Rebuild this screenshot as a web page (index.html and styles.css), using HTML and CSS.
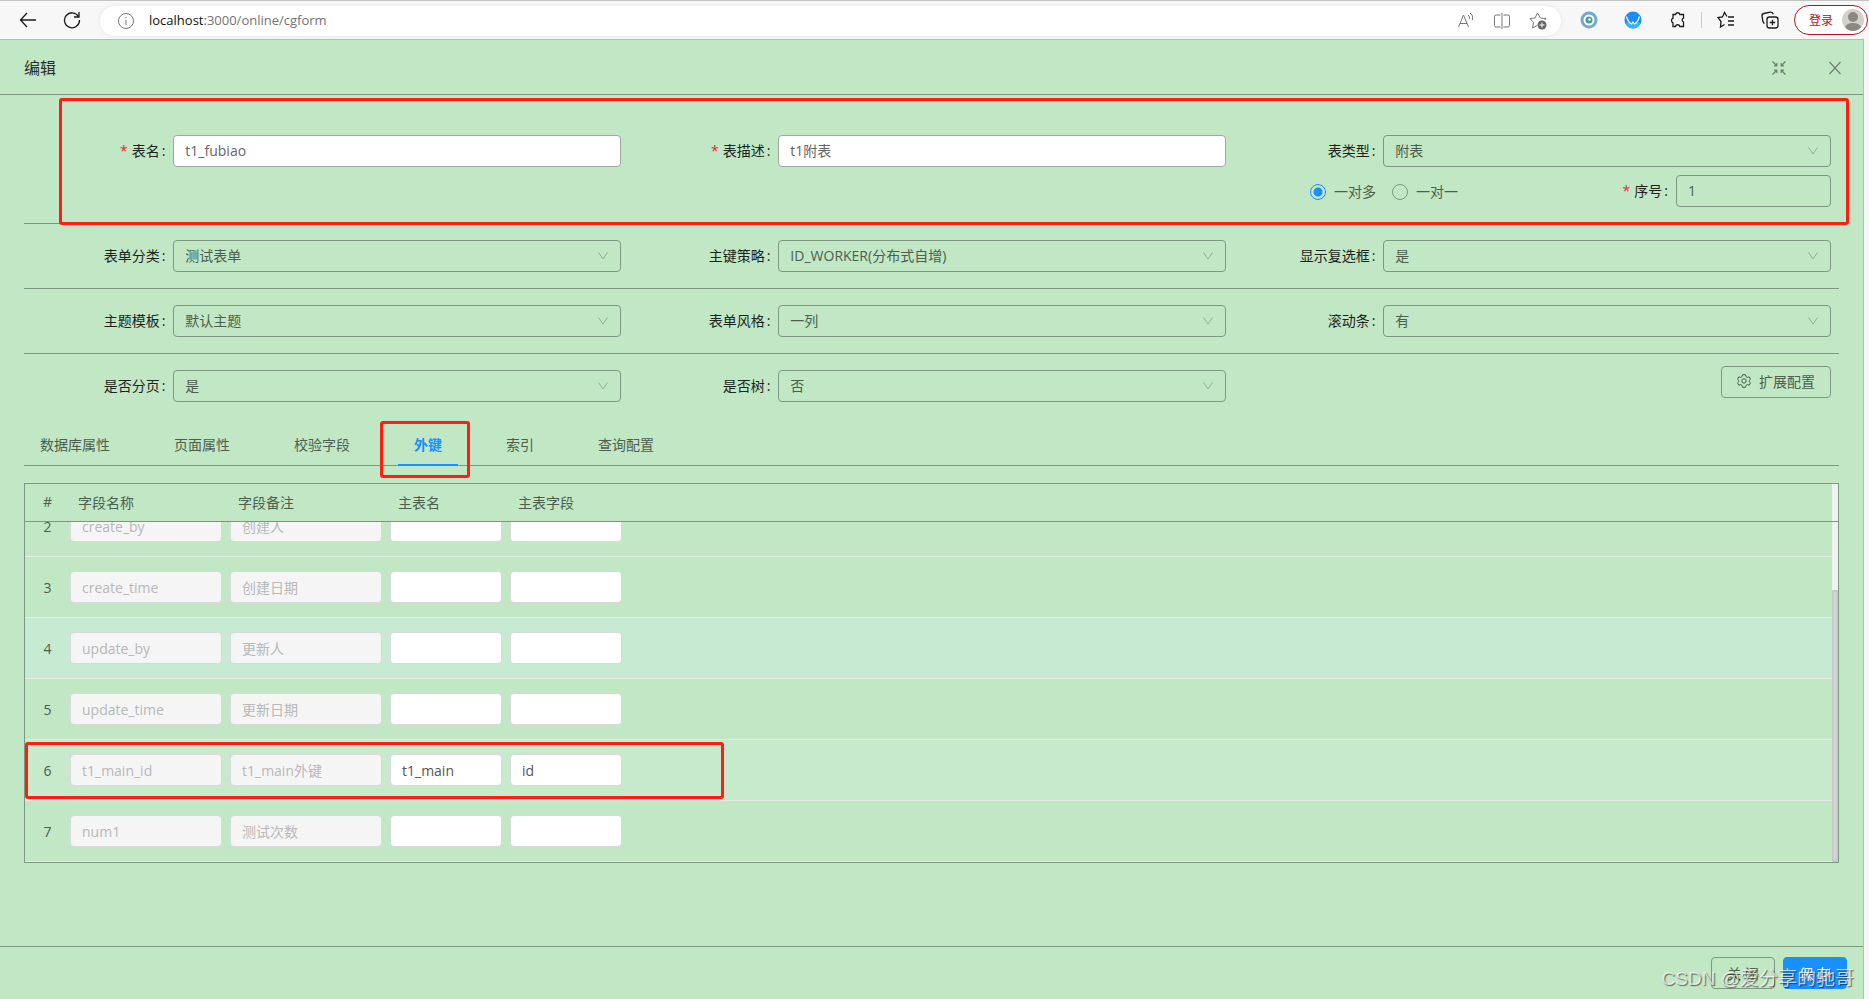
FILE: index.html
```html
<!DOCTYPE html>
<html lang="zh-CN">
<head>
<meta charset="utf-8">
<title>编辑</title>
<link rel="stylesheet" href="styles.css">
</head>
<body>
<div class="app">
  <header class="browser">
    <div class="nav">
      <button class="ico" aria-label="后退"><svg width="18" height="16" viewBox="0 0 18 16"><path d="M17 8H1.500M8 1L1.500 8L8 15"/></svg></button>
      <button class="ico" aria-label="刷新"><svg width="18" height="18" viewBox="0 0 18 18"><path d="M15.500 5.500A7.500 7.500 0 1 0 16.500 9M16 1V6H11"/></svg></button>
    </div>
    <div class="omnibox">
      <svg class="info" width="18" height="18" viewBox="0 0 18 18"><circle cx="9" cy="9" r="7.500"/><path d="M9 8V13M9 5V6.300"/></svg>
      <span class="url"><b>localhost</b>:3000/online/cgform</span>
      <div class="omni-icons">
        <svg width="18" height="18" viewBox="0 0 18 18"><path d="M1.500 15L6.500 3L11.500 15M3 11.500H10M11 3Q13 4.500 12.500 7M13 1Q17 3.500 15.500 8"/></svg>
        <svg width="18" height="18" viewBox="0 0 18 18"><path d="M7.500 3H3Q1.500 3 1.500 4.500V13.500Q1.500 15 3 15H7.500M10.500 3H15Q16.500 3 16.500 4.500V13.500Q16.500 15 15 15H10.500M9 1V17"/></svg>
        <svg width="18" height="18" viewBox="0 0 18 18"><path d="M15.500 8L17 6.500L11.500 6L8.500 1L6 6L1 6.500L4.500 10.500L3.500 16L8 13.500"/><circle class="solid" cx="13" cy="13" r="4.500"/><path class="plus" d="M13 10.500V15.500M10.500 13H15.500"/></svg>
      </div>
    </div>
    <div class="extensions">
      <svg width="18" height="18" viewBox="0 0 18 18"><circle cx="9" cy="9" r="8.500" fill="#6fabd0"/><circle cx="9" cy="9" r="5.500" fill="#fff"/><circle cx="9" cy="9" r="3.500" fill="#4a9c98"/><circle cx="9.500" cy="8.500" r="1.200" fill="#fff"/></svg>
      <svg width="18" height="18" viewBox="0 0 18 18"><circle cx="9" cy="9" r="8.500" fill="#1b8df7"/><path d="M1 12Q5 10 9 13Q13 10 17 12Q14 17.500 9 17.500Q4 17.500 1 12Z" fill="#35b3f3"/><path d="M2.500 5.500Q4.500 12 7.500 13L9 11L10.500 13Q13.500 12 15.500 5.500" stroke="#fff" stroke-width="1.200" fill="none"/></svg>
      <svg class="line" width="18" height="18" viewBox="0 0 18 18"><path d="M5 3.500H7.500A2.200 2.200 0 0 1 11.800 3.500H15.500V7.200A2 2 0 0 0 15.500 11V15.500H11.800A2.200 2.200 0 0 0 7.500 15.500H5V11.800A2.500 2.500 0 0 1 5 7.200Z"/></svg>
      <span class="sep"></span>
      <svg class="line" width="18" height="18" viewBox="0 0 18 18"><path d="M10 5.500L7.500 1.500L5.500 6L1 6.500L4 10.500L3.500 16L7.500 13.500M11 6H17M11 10H17M11 14H17"/></svg>
      <svg class="line" width="18" height="18" viewBox="0 0 18 18"><rect x="6" y="6" width="11" height="11" rx="2.500"/><path d="M3.500 12.500Q2.500 12 2 10.500L1 5Q.8 3 2.800 2.500L9.500 1.200Q11.500 1 12.300 3.300M11.500 8.800V14.200M8.800 11.500H14.200"/></svg>
    </div>
    <button class="login">登录
      <svg width="22" height="22" viewBox="0 0 22 22"><circle cx="11" cy="11" r="11" fill="#d4d0cc"/><circle cx="11" cy="8" r="5" fill="#8b8783"/><path d="M3 18Q5 14 11 14T19 18Q16 22 11 22T3 18Z" fill="#8b8783"/></svg>
    </button>
  </header>

  <main class="modal">
    <div class="modal-head">
      <h1>编辑</h1>
      <button class="ico soft" aria-label="还原"><svg width="14" height="14" viewBox="0 0 14 14"><path d="M.5 .5L4.500 4.500M4.800 2V4.800H2M13.500 .5L9.500 4.500M9.200 2V4.800H12M.5 13.500L4.500 9.500M2 9.200H4.800V12M13.500 13.500L9.500 9.500M12 9.200H9.200V12"/></svg></button>
      <button class="ico soft" aria-label="关闭窗口"><svg width="14" height="14" viewBox="0 0 14 14"><path d="M1.500 1L12.500 13M12.500 1L1.500 13"/></svg></button>
    </div>

    <div class="modal-body">
      <form class="form">
        <div class="row first">
          <div class="field"><label class="req" for="f1">表名</label><input class="ctl white" id="f1" value="t1_fubiao"></div>
          <div class="field"><label class="req" for="f2">表描述</label><input class="ctl white" id="f2" value="t1附表"></div>
          <div class="stack">
            <div class="field"><label for="f3">表类型</label><div class="sel"><select class="ctl" id="f3"><option>附表</option></select><svg width="10" height="8" viewBox="0 0 10 8"><path d="M.5 .5L5 7L9.500 .5"/></svg></div></div>
            <div class="relation">
              <label class="radio"><input type="radio" name="rel" checked>一对多</label>
              <label class="radio"><input type="radio" name="rel">一对一</label>
              <div class="order"><label class="req" for="f4">序号</label><input class="ctl" id="f4" value="1"></div>
            </div>
          </div>
          <div class="mark mark-form"></div>
        </div>
        <div class="row">
          <div class="field"><label for="f5">表单分类</label><div class="sel"><select class="ctl" id="f5"><option>测试表单</option></select><svg width="10" height="8" viewBox="0 0 10 8"><path d="M.5 .5L5 7L9.500 .5"/></svg></div></div>
          <div class="field"><label for="f6">主键策略</label><div class="sel"><select class="ctl" id="f6"><option>ID_WORKER(分布式自增)</option></select><svg width="10" height="8" viewBox="0 0 10 8"><path d="M.5 .5L5 7L9.500 .5"/></svg></div></div>
          <div class="field"><label for="f7">显示复选框</label><div class="sel"><select class="ctl" id="f7"><option>是</option></select><svg width="10" height="8" viewBox="0 0 10 8"><path d="M.5 .5L5 7L9.500 .5"/></svg></div></div>
        </div>
        <div class="row">
          <div class="field"><label for="f8">主题模板</label><div class="sel"><select class="ctl" id="f8"><option>默认主题</option></select><svg width="10" height="8" viewBox="0 0 10 8"><path d="M.5 .5L5 7L9.500 .5"/></svg></div></div>
          <div class="field"><label for="f9">表单风格</label><div class="sel"><select class="ctl" id="f9"><option>一列</option></select><svg width="10" height="8" viewBox="0 0 10 8"><path d="M.5 .5L5 7L9.500 .5"/></svg></div></div>
          <div class="field"><label for="f10">滚动条</label><div class="sel"><select class="ctl" id="f10"><option>有</option></select><svg width="10" height="8" viewBox="0 0 10 8"><path d="M.5 .5L5 7L9.500 .5"/></svg></div></div>
        </div>
        <div class="row last">
          <div class="field"><label for="f11">是否分页</label><div class="sel"><select class="ctl" id="f11"><option>是</option></select><svg width="10" height="8" viewBox="0 0 10 8"><path d="M.5 .5L5 7L9.500 .5"/></svg></div></div>
          <div class="field"><label for="f12">是否树</label><div class="sel"><select class="ctl" id="f12"><option>否</option></select><svg width="10" height="8" viewBox="0 0 10 8"><path d="M.5 .5L5 7L9.500 .5"/></svg></div></div>
          <div class="extra"><button type="button" class="btn"><svg width="14" height="14" viewBox="0 0 14 14"><path d="M5.500 .7H8.500L9 2.600L10.300 3.400L12.200 2.800L13.500 5.300L12.200 6.500V7.500L13.500 8.700L12.200 11.200L10.300 10.600L9 11.400L8.500 13.300H5.500L5 11.400L3.700 10.600L1.800 11.200L.5 8.700L1.800 7.500V6.500L.5 5.300L1.800 2.800L3.700 3.400L5 2.600Z"/><circle cx="7" cy="7" r="2.200"/></svg>扩展配置</button></div>
        </div>
      </form>

      <nav class="tabs">
        <button class="tab">数据库属性</button>
        <button class="tab">页面属性</button>
        <button class="tab">校验字段</button>
        <button class="tab active">外键<span class="mark mark-tab"></span></button>
        <button class="tab">索引</button>
        <button class="tab">查询配置</button>
      </nav>

      <section class="grid">
        <div class="scroller">
          <table>
            <colgroup><col class="c-no"><col class="c-wide"><col class="c-wide"><col class="c-mid"><col class="c-mid"><col></colgroup>
            <thead><tr><th class="no">#</th><th>字段名称</th><th>字段备注</th><th>主表名</th><th>主表字段</th><th></th></tr></thead>
            <tbody>
              <tr><td class="no">2</td><td><input disabled aria-label="字段名称" value="create_by"></td><td><input disabled aria-label="字段备注" value="创建人"></td><td><input aria-label="主表名"></td><td><input aria-label="主表字段"></td><td></td></tr>
              <tr><td class="no">3</td><td><input disabled aria-label="字段名称" value="create_time"></td><td><input disabled aria-label="字段备注" value="创建日期"></td><td><input aria-label="主表名"></td><td><input aria-label="主表字段"></td><td></td></tr>
              <tr class="hover"><td class="no">4</td><td><input disabled aria-label="字段名称" value="update_by"></td><td><input disabled aria-label="字段备注" value="更新人"></td><td><input aria-label="主表名"></td><td><input aria-label="主表字段"></td><td></td></tr>
              <tr><td class="no">5</td><td><input disabled aria-label="字段名称" value="update_time"></td><td><input disabled aria-label="字段备注" value="更新日期"></td><td><input aria-label="主表名"></td><td><input aria-label="主表字段"></td><td></td></tr>
              <tr class="picked"><td class="no">6<span class="mark mark-row"></span></td><td><input disabled aria-label="字段名称" value="t1_main_id"></td><td><input disabled aria-label="字段备注" value="t1_main外键"></td><td><input aria-label="主表名" value="t1_main"></td><td><input aria-label="主表字段" value="id"></td><td></td></tr>
              <tr><td class="no">7</td><td><input disabled aria-label="字段名称" value="num1"></td><td><input disabled aria-label="字段备注" value="测试次数"></td><td><input aria-label="主表名"></td><td><input aria-label="主表字段"></td><td></td></tr>
            </tbody>
          </table>
        </div>
        <div class="track"><div class="track-head"></div><div class="track-body"><div class="thumb"></div></div></div>
      </section>
    </div>

    <footer class="modal-foot">
      <button class="btn wide">关 闭</button>
      <button class="btn wide primary">保 存</button>
      <span class="watermark">CSDN @爱分享的驰哥</span>
    </footer>
  </main>
</div>
</body>
</html>
```
FILE: styles.css
```css
* { box-sizing: border-box; }
:root {
  --page: #c1e7c5;
  --line: #7d9882;
  --text: #4c5f4e;
  --red: #ff1f10;
}
body, button, input, select {
  font-family: "Open Sans", "Noto Sans CJK SC", sans-serif;
  font-size: 14px;
}
body { margin: 0; background: #f7f7f7; color: var(--text); }
button { border: 0; background: none; padding: 0; color: inherit; cursor: pointer; }
svg { display: block; flex: none; fill: none; stroke: currentColor; }
.app { display: flex; flex-direction: column; height: 100vh; overflow: hidden; }

/* browser bar */
.browser { display: flex; align-items: center; height: 39px; flex: none; border-top: 1px solid #c3c3c3; background: #f7f7f7; }
.nav { display: flex; gap: 26px; width: 100px; padding-left: 19px; color: #1b1b1b; }
.ico { display: flex; align-items: center; }
.ico svg { stroke-width: 1.3; }
.omnibox { flex: 1; display: flex; align-items: center; height: 30px; margin-top: 1px; padding: 0 14px 0 17px; border-radius: 15px; background: #fff; box-shadow: 0 0 4px #e4e4e4; color: #777; }
.url { flex: 1; margin-left: 14px; padding-bottom: 1px; font-size: 13px; color: #737373; }
.url b { font-weight: 400; color: #111; }
.omni-icons { display: flex; gap: 18px; }
.omni-icons .solid { fill: #666; stroke: none; }
.omni-icons .plus { stroke: #fff; }
.extensions { display: flex; align-items: center; gap: 26px; padding: 0 15px 0 19px; color: #1b1b1b; }
.extensions svg { stroke: none; }
.extensions .line { stroke: currentColor; stroke-width: 1.3; }
.sep { width: 1px; height: 16px; margin: 0 -11px; background: #ccc; }
.login { display: flex; align-items: center; gap: 9px; height: 30px; padding: 0 3px 0 14px; margin-right: 1px; border: 1px solid #b3141a; border-radius: 15px; background: #fff; color: #b3141a; font-size: 12px; }
.login svg { stroke: none; }

/* dialog */
.modal { flex: 1; min-height: 0; display: flex; flex-direction: column; margin-right: 5px; border: solid #bbb; border-width: 1px 1px 0 0; background: var(--page); }
.modal-head { display: flex; align-items: center; gap: 42px; height: 55px; flex: none; padding: 1px 21px 0 24px; border-bottom: 1px solid var(--line); }
.modal-head h1 { flex: 1; margin: 0; font-size: 16px; font-weight: 400; line-height: 24px; color: #273029; }
.soft { color: #6c826f; }
.soft svg { stroke-width: 1.2; }
.modal-body { flex: 1; min-height: 0; padding: 24px 24px 0; }
.modal-foot { position: relative; display: flex; justify-content: flex-end; gap: 8px; height: 53px; flex: none; padding: 10px 16px; border-top: 1px solid var(--line); }

/* form */
.row { position: relative; display: grid; grid-template-columns: repeat(3, 1fr); padding: 16px 0; border-bottom: 1px solid var(--line); }
.row.last { border: 0; }
.field { display: grid; grid-template-columns: 6fr 19fr; align-items: center; height: 32px; padding: 0 8px; }
.field > label, .order > label { text-align: right; padding-right: 8px; padding-bottom: 2px; color: #1d241e; white-space: nowrap; }
.field > label::after, .order > label::after { content: ":"; margin-left: 2px; }
.req::before { content: "*"; margin-right: 4px; color: #f5222d; }
.ctl { appearance: none; width: 100%; height: 32px; padding: 0 11px 2px; border: 1px solid var(--line); border-radius: 4px; background: transparent; color: var(--text); min-width: 0; outline: 0; }
.white { background: #fff; border-color: #a4a4a4; color: #666; }
.sel { position: relative; }
.sel select { display: block; }
.sel svg { position: absolute; right: 13px; top: 12px; color: #8fae94; pointer-events: none; }
.stack { display: flex; flex-direction: column; gap: 8px; }
.relation { display: flex; align-items: center; height: 32px; padding-right: 8px; padding-left: 76px; }
.radio { display: flex; align-items: center; gap: 8px; margin-right: 16px; }
.radio input { appearance: none; width: 16px; height: 16px; margin: 1px 0 0; border: 1px solid var(--line); border-radius: 50%; }
.radio input:checked { border-color: #1890ff; background: radial-gradient(#1890ff 4px, transparent 5px); }
.order { display: flex; align-items: center; margin-left: auto; }
.order .ctl { width: 155px; }
.extra { display: flex; justify-content: flex-end; padding-right: 8px; margin-top: -4px; }
.btn { display: flex; align-items: center; justify-content: center; gap: 8px; height: 32px; padding: 0 15px 2px; border: 1px solid var(--line); border-radius: 4px; }
.wide { width: 64px; padding: 0; }
.primary { border-color: #1890ff; background: #1890ff; color: #fff; }

/* tabs */
.tabs { display: flex; gap: 32px; height: 48px; border-bottom: 1px solid var(--line); }
.tab { position: relative; height: 48px; padding: 5px 16px 0; border-bottom: 2px solid transparent; }
.tab.active { color: #1890ff; border-color: #1890ff; font-weight: 700; }

/* table */
.grid { display: flex; height: 380px; margin-top: 17px; border: 1px solid var(--line); }
.scroller { flex: 1; display: flex; flex-direction: column-reverse; overflow-y: auto; scrollbar-width: none; }
table { width: 100%; flex: none; table-layout: fixed; border-collapse: separate; border-spacing: 0; }
.c-no { width: 41px; }
.c-wide { width: 160px; }
.c-mid { width: 120px; }
th { position: sticky; top: 0; z-index: 1; height: 38px; padding: 0 12px 2px; border-bottom: 1px solid var(--line); background: var(--page); font-weight: 400; text-align: left; }
td { height: 61px; padding: 0 4px; border-bottom: 1px solid #e3ebe3; }
th.no, td.no { position: relative; padding: 0 0 0 4px; text-align: center; }
th.no { position: sticky; padding-bottom: 2px; }
td input { display: block; width: 100%; height: 32px; padding: 0 11px; border: 1px solid #d9d9d9; border-radius: 4px; background: #fff; color: #555; outline: 0; }
td input:disabled { background: #f5f5f5; color: #b8b8b8; }
.hover td { background: #c7ead2; }
.picked td { background: #c7eacd; }
.track { width: 6px; display: flex; flex-direction: column; background: #f1f1f1; }
.track-head { height: 38px; border-bottom: 1px solid var(--line); }
.track-body { flex: 1; display: flex; align-items: flex-end; }
.thumb { width: 100%; height: 80%; border-radius: 2px; background: #d6d6d6; box-shadow: inset 0 0 3px #aaa; }

/* red annotations and watermark */
.mark { position: absolute; border: 3px solid var(--red); border-radius: 3px; pointer-events: none; z-index: 2; }
.mark-form { left: 35px; right: -10px; top: -21px; bottom: -2px; }
.mark-tab { left: -18px; right: -12px; top: 3px; bottom: -14px; }
.mark-row { left: 0; top: 2px; width: 699px; height: 57px; }
.watermark { position: absolute; right: 9px; top: 18px; font-size: 19px; line-height: 28px; font-family: "Liberation Sans", "Noto Sans CJK SC", sans-serif; color: rgba(255, 255, 255, .7); text-shadow: 1px 1px 1px rgba(0, 0, 0, .55); white-space: nowrap; pointer-events: none; }
```
